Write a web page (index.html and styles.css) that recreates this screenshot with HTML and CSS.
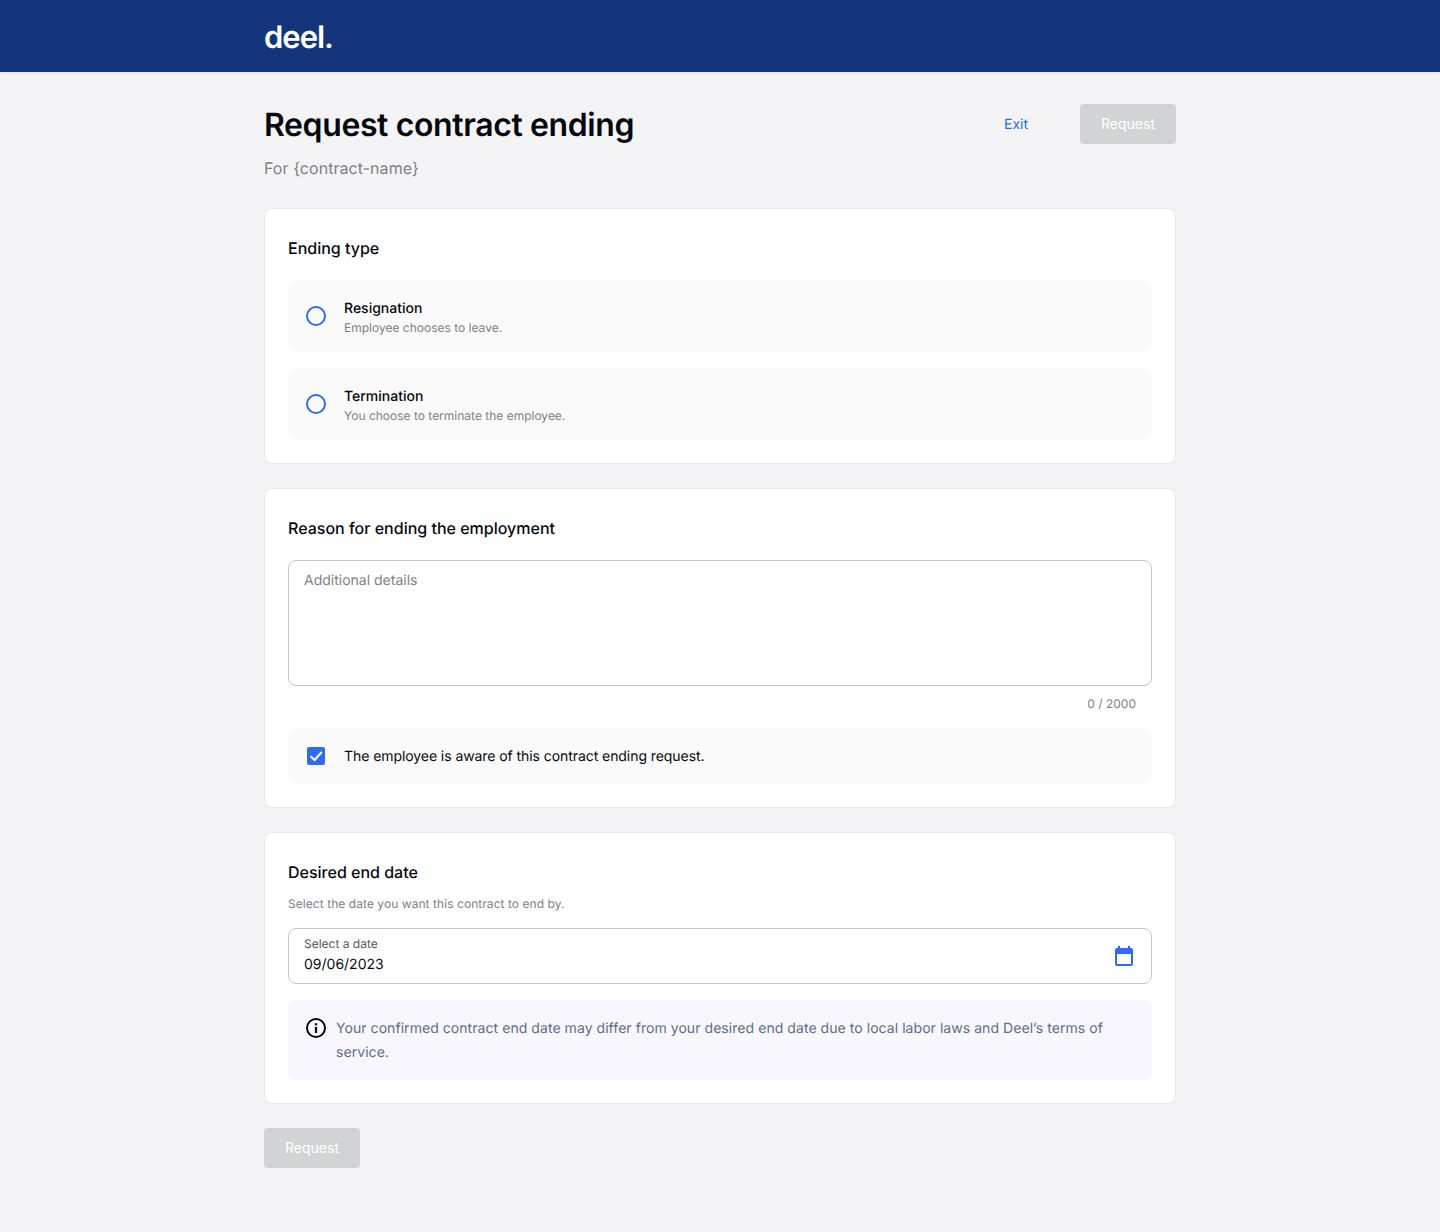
FILE: index.html
```html
<!DOCTYPE html>
<html lang="en-US">
  <head>
    <meta charset="utf-8"/>
    <title>Request contract ending</title>
    <link rel="stylesheet" href="styles.css">
  </head>

  <body>
    <header class="topbar">
      <div class="topbar-inner">
        <span class="logo">deel.</span>
      </div>
    </header>

    <main class="page">
      <div class="page-head">
        <div>
          <h1>Request contract ending</h1>
          <p class="subtitle">For {contract-name}</p>
        </div>
        <div class="actions">
          <a class="exit" href="#">Exit</a>
          <button class="btn" disabled>Request</button>
        </div>
      </div>

      <section class="card">
        <h2>Ending type</h2>
        <label class="option">
          <span class="radio"></span>
          <span class="option-text">
            <span class="option-title">Resignation</span>
            <span class="option-desc">Employee chooses to leave.</span>
          </span>
        </label>
        <label class="option option-last">
          <span class="radio"></span>
          <span class="option-text">
            <span class="option-title">Termination</span>
            <span class="option-desc">You choose to terminate the employee.</span>
          </span>
        </label>
      </section>

      <section class="card">
        <h2>Reason for ending the employment</h2>
        <div class="textarea">Additional details</div>
        <div class="counter">0 / 2000</div>
        <label class="aware">
          <svg class="check" width="18" height="18" viewBox="0 0 18 18">
            <rect width="18" height="18" rx="2" fill="#2f6bf2"/>
            <path d="M3.6 9.2L7.6 13 14.8 5" fill="none" stroke="#fff" stroke-width="2"/>
          </svg>
          <span class="aware-text">The employee is aware of this contract ending request.</span>
        </label>
      </section>

      <section class="card">
        <h2>Desired end date</h2>
        <p class="hint">Select the date you want this contract to end by.</p>
        <div class="date-field">
          <div>
            <div class="date-label">Select a date</div>
            <div class="date-value">09/06/2023</div>
          </div>
          <svg width="18" height="20" viewBox="0 0 18 20">
            <path d="M3 0h2v2h8V0h2v2h1a2 2 0 0 1 2 2v14a2 2 0 0 1-2 2H2a2 2 0 0 1-2-2V4a2 2 0 0 1 2-2h1zM2 8v10h14V8z" fill="#2f6bf2"/>
          </svg>
        </div>
        <div class="note">
          <svg class="note-icon" width="20" height="20" viewBox="0 0 20 20">
            <circle cx="10" cy="10" r="9" fill="none" stroke="#05090f" stroke-width="2"/>
            <rect x="8.9" y="9" width="2.2" height="6" fill="#05090f"/>
            <rect x="8.9" y="5.2" width="2.2" height="2.2" fill="#05090f"/>
          </svg>
          <p>Your confirmed contract end date may differ from your desired end date due to local labor laws and Deel’s terms of service.</p>
        </div>
      </section>

      <button class="btn" disabled>Request</button>
    </main>
  </body>

</html>
```

FILE: styles.css
```css
* {
  box-sizing: border-box;
}

body {
  margin: 0;
  background-color: #f4f4f6;
  color: #05090f;
  font: 14px / 20px Inter, "Noto Sans", sans-serif;
  text-rendering: geometricPrecision;
}

h1, h2, p {
  margin: 0;
}

.topbar {
  height: 72px;
  background-color: #14357c;
  box-shadow: 0 1px 3px rgba(0, 0, 0, 0.08);
}

.topbar-inner {
  width: 912px;
  margin: 0 auto;
  height: 72px;
  display: flex;
  align-items: center;
}

.logo {
  color: #fff;
  font-size: 31px;
  line-height: 36px;
  font-weight: 600;
  letter-spacing: -1px;
  padding-top: 4px;
}

.page {
  width: 912px;
  margin: 0 auto;
  padding: 32px 0 64px;
}

.page-head {
  display: flex;
  justify-content: space-between;
  align-items: flex-start;
  margin-bottom: 28px;
}

h1 {
  padding-top: 1px;
  font-size: 32px;
  line-height: 40px;
  font-weight: 600;
  letter-spacing: -0.39px;
}

.subtitle {
  margin-top: 11px;
  font-size: 16px;
  line-height: 24px;
  letter-spacing: 0.05px;
  color: #7f8185;
}

.actions {
  display: flex;
  align-items: center;
  gap: 52px;
}

.exit {
  padding-top: 1px;
  color: #2f6bf2;
  text-decoration: none;
}

.btn {
  display: block;
  width: 96px;
  height: 40px;
  border: 0;
  border-radius: 4px;
  background-color: #d2d3d5;
  color: #fff;
  font: inherit;
}

.card {
  background-color: #fff;
  border: 1px solid #e9e9ef;
  border-radius: 8px;
  padding: 23px;
  margin-bottom: 24px;
}

h2 {
  font-size: 16px;
  line-height: 32px;
  font-weight: 500;
  margin-bottom: 16px;
}

.option {
  display: flex;
  align-items: center;
  gap: 18px;
  height: 72px;
  padding: 0 18px;
  margin-bottom: 16px;
  background-color: #fafafa;
  border-radius: 8px;
}

.option-last {
  margin-bottom: 0;
}

.radio {
  width: 20px;
  height: 20px;
  border: 2px solid #2f6bf2;
  border-radius: 50%;
}

.option-text {
  padding-top: 4px;
}

.option-title {
  display: block;
  padding-top: 1px;
  margin-bottom: -1px;
  font-weight: 500;
}

.option-desc {
  display: block;
  font-size: 12px;
  line-height: 20px;
  color: #7f8185;
}

.textarea {
  height: 126px;
  padding: 10px 15px;
  border: 1px solid #c4c5c8;
  border-radius: 8px;
  color: #7f8185;
}

.counter {
  height: 42px;
  padding: 8px 16px 0;
  text-align: right;
  font-size: 12px;
  color: #7f8185;
}

.aware {
  display: flex;
  align-items: center;
  gap: 19px;
  height: 56px;
  padding: 0 19px;
  background-color: #fafafa;
  border-radius: 8px;
}

.aware-text {
  padding-top: 2px;
  letter-spacing: -0.07px;
}

.hint {
  margin-top: -8px;
  margin-bottom: 16px;
  font-size: 12px;
  line-height: 16px;
  letter-spacing: 0.06px;
  color: #7f8185;
}

.date-field {
  display: flex;
  justify-content: space-between;
  align-items: center;
  height: 56px;
  padding: 0 18px 0 15px;
  border: 1px solid #c4c5c8;
  border-radius: 8px;
}

.date-label {
  margin-top: -1px;
  font-size: 12px;
  line-height: 16px;
  color: #55585c;
}

.date-value {
  margin-top: 2px;
  line-height: 22px;
}

.note {
  display: flex;
  gap: 10px;
  margin-top: 16px;
  padding: 17px 16px 15px;
  height: 80px;
  background-color: #f9f7fe;
  border-radius: 8px;
}

.note p {
  line-height: 24px;
  letter-spacing: 0.055px;
  color: #5a6f88;
}

.note-icon {
  flex: none;
  margin: 1px 0 0 2px;
}
```
